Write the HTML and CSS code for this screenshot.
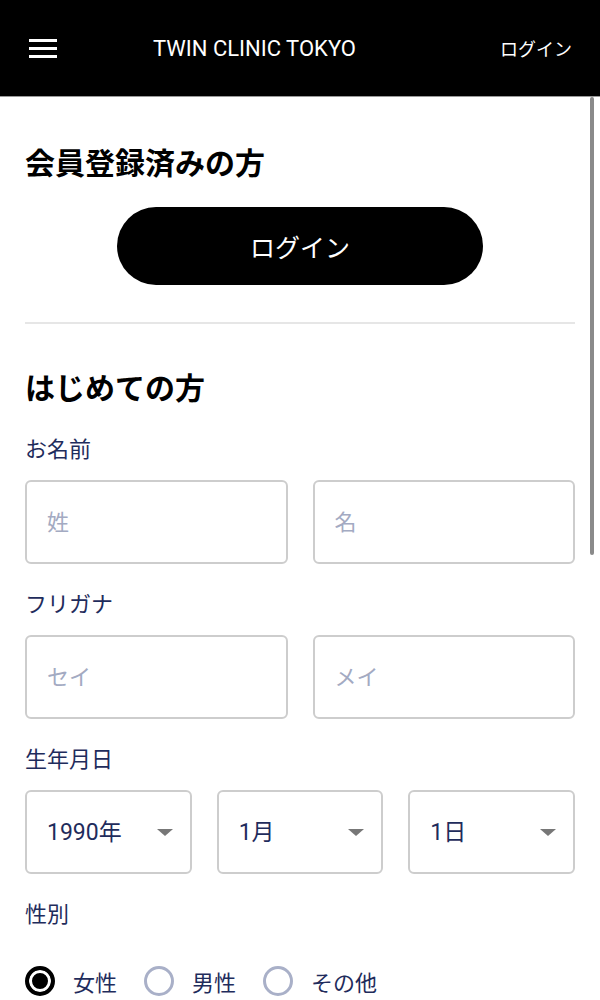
FILE: index.html
```html
<!DOCTYPE html>
<html lang="ja">
<head>
    <meta charset="UTF-8">
    <meta name="viewport" content="width=device-width, initial-scale=1.0">
    <title>TWIN CLINIC TOKYO</title>
    <link rel="stylesheet" href="styles.css">
</head>
<body>
    <header class="header">
        <button class="menu-btn" type="button" aria-label="メニュー">
            <svg width="28" height="19" viewBox="0 0 28 19">
                <rect x="0" y="0" width="28" height="3" fill="#fff"/>
                <rect x="0" y="8" width="28" height="3" fill="#fff"/>
                <rect x="0" y="16" width="28" height="3" fill="#fff"/>
            </svg>
        </button>
        <div class="logo">TWIN CLINIC TOKYO</div>
        <a class="header-login" href="#">ログイン</a>
    </header>

    <main class="container">
        <!-- Registered members -->
        <section class="member">
            <h2>会員登録済みの方</h2>
            <div class="login-wrap">
                <button class="login-btn" type="button">ログイン</button>
            </div>
        </section>

        <hr class="divider">

        <!-- New registration -->
        <form class="signup">
            <h2>はじめての方</h2>

            <div class="field">
                <label class="label">お名前</label>
                <div class="row row-2">
                    <input class="text-input" type="text" placeholder="姓">
                    <input class="text-input" type="text" placeholder="名">
                </div>
            </div>

            <div class="field">
                <label class="label">フリガナ</label>
                <div class="row row-2">
                    <input class="text-input" type="text" placeholder="セイ">
                    <input class="text-input" type="text" placeholder="メイ">
                </div>
            </div>

            <div class="field">
                <label class="label">生年月日</label>
                <div class="row row-3">
                    <div class="select-wrap">
                        <select class="select">
                            <option>1990年</option>
                        </select>
                        <span class="arrow"></span>
                    </div>
                    <div class="select-wrap">
                        <select class="select">
                            <option>1月</option>
                        </select>
                        <span class="arrow"></span>
                    </div>
                    <div class="select-wrap">
                        <select class="select">
                            <option>1日</option>
                        </select>
                        <span class="arrow"></span>
                    </div>
                </div>
            </div>

            <div class="field">
                <label class="label">性別</label>
                <div class="radios">
                    <label class="radio"><input type="radio" name="gender" checked><span>女性</span></label>
                    <label class="radio"><input type="radio" name="gender"><span>男性</span></label>
                    <label class="radio"><input type="radio" name="gender"><span>その他</span></label>
                </div>
            </div>
        </form>
    </main>

    <div class="scroll-thumb"></div>
</body>
</html>
```

FILE: styles.css
```css
body {
    margin: 0;
    font-family: Roboto, "Noto Sans CJK JP", sans-serif;
    color: #000;
    background: #fff;
}
.header {
    height: 96px;
    background-color: #000;
    border-bottom: 1px solid #999;
    display: flex;
    align-items: center;
    padding: 0 28px 0 29px;
}
.menu-btn {
    background: none;
    border: none;
    padding: 0;
    display: flex;
    cursor: pointer;
}
.logo {
    margin-left: 96px;
    color: #fff;
    font-size: 22px;
}
.header-login {
    margin-left: auto;
    color: #fff;
    text-decoration: none;
    font-size: 18px;
}
.container {
    padding: 0 25px;
}
h2 {
    margin: 0;
    font-size: 30px;
    line-height: 42px;
    font-weight: 700;
}
.member {
    padding-top: 46px;
}
.login-wrap {
    display: flex;
    justify-content: center;
    margin-top: 22px;
}
.login-btn {
    width: 366px;
    height: 78px;
    border: none;
    border-radius: 39px;
    background-color: #000;
    color: #fff;
    font-family: inherit;
    font-size: 25px;
    font-weight: 400;
    cursor: pointer;
}
.divider {
    margin: 37px 0 0;
    border: none;
    height: 2px;
    background-color: #e6e6e6;
}
.signup {
    padding-top: 44px;
}
.field {
    margin-top: 26px;
}
.signup h2 + .field {
    margin-top: 25px;
}
.label {
    display: block;
    font-size: 22px;
    line-height: 30px;
    color: #1f2c5c;
    margin-bottom: 15px;
}
.row {
    display: grid;
    gap: 25px;
}
.row-2 {
    grid-template-columns: 1fr 1fr;
}
.row-3 {
    grid-template-columns: 1fr 1fr 1fr;
}
.text-input, .select {
    box-sizing: border-box;
    width: 100%;
    height: 84px;
    border: 2px solid #cdcdcd;
    border-radius: 6px;
    padding: 0 20px;
    font-family: inherit;
    font-size: 22px;
    color: #1f2c5c;
    background: #fff;
    outline: none;
}
.select {
    appearance: none;
    -webkit-appearance: none;
    font-size: 23px;
}
.text-input::placeholder {
    color: #a3aac2;
}
.select-wrap {
    position: relative;
}
.arrow {
    position: absolute;
    right: 19px;
    top: 39px;
    width: 0;
    height: 0;
    border-left: 8px solid transparent;
    border-right: 8px solid transparent;
    border-top: 7px solid #777;
    pointer-events: none;
}
.radios {
    display: flex;
    align-items: center;
    margin-top: 35px;
    padding-bottom: 40px;
}
.radio {
    display: flex;
    align-items: center;
    margin-right: 27px;
    font-size: 22px;
    color: #1f2c5c;
}
.radio input {
    appearance: none;
    -webkit-appearance: none;
    box-sizing: border-box;
    width: 30px;
    height: 30px;
    margin: 0 18px 0 0;
    border: 3px solid #a9b0c8;
    border-radius: 50%;
}
.radio input:checked {
    border: 4px solid #000;
    background-color: #000;
    box-shadow: inset 0 0 0 3px #fff;
}
.scroll-thumb {
    position: fixed;
    top: 97px;
    right: 6px;
    width: 4px;
    height: 458px;
    border-radius: 2px;
    background-color: #8a8a8a;
}
```
